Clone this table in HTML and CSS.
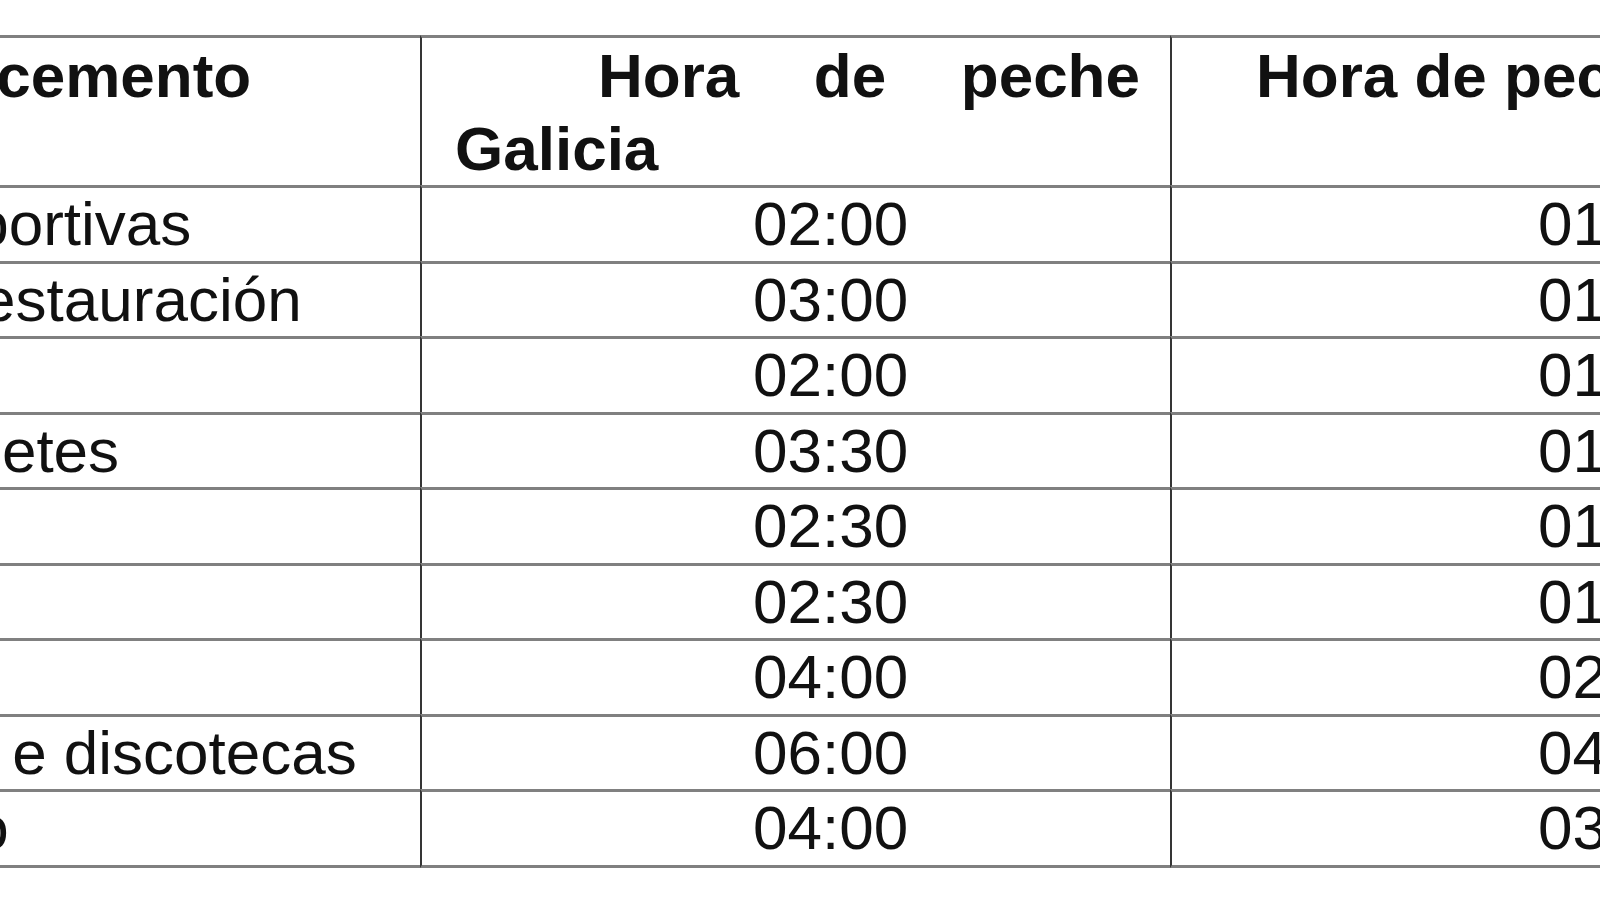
FILE: index.html
```html
<!DOCTYPE html>
<html lang="gl">
<head>
<meta charset="utf-8">
<title>Horarios de peche</title>
<link rel="stylesheet" href="styles.css">
</head>
<body>
<div class="crop">
  <table class="hours">
    <colgroup>
      <col class="c-type">
      <col class="c-gal">
      <col class="c-other">
    </colgroup>
    <thead>
      <tr>
        <th class="type">Tipo de establecemento</th>
        <th class="gal">
          <span class="spread"><span>Hora</span><span>de</span><span>peche</span></span>
          <span class="line">Galicia</span>
        </th>
        <th class="other">Hora de peche</th>
      </tr>
    </thead>
    <tbody>
      <tr><td class="type">Actividades deportivas</td><td class="gal">02:00</td><td class="other">01:00</td></tr>
      <tr><td class="type">Cafetarías de restauración</td><td class="gal">03:00</td><td class="other">01:00</td></tr>
      <tr><td class="type">Cafés</td><td class="gal">02:00</td><td class="other">01:00</td></tr>
      <tr><td class="type">Salas de banquetes</td><td class="gal">03:30</td><td class="other">01:00</td></tr>
      <tr><td class="type">Bares</td><td class="gal">02:30</td><td class="other">01:00</td></tr>
      <tr><td class="type">Cafetarías</td><td class="gal">02:30</td><td class="other">01:00</td></tr>
      <tr><td class="type">Pubs</td><td class="gal">04:00</td><td class="other">02:00</td></tr>
      <tr><td class="type">Salas de festas e discotecas</td><td class="gal">06:00</td><td class="other">04:00</td></tr>
      <tr><td class="type">Bingos e casino</td><td class="gal">04:00</td><td class="other">03:00</td></tr>
    </tbody>
  </table>
</div>
</body>
</html>
```

FILE: styles.css
```css
html, body {
  margin: 0;
  padding: 0;
  background: #ffffff;
}

.crop {
  width: 1600px;
  height: 900px;
  overflow: hidden;
  padding-top: 35px;
  box-sizing: border-box;
}

.hours {
  margin-left: -460px;
  width: 2530px;
  table-layout: fixed;
  border-collapse: separate;
  border-spacing: 0;
  font-family: "Liberation Sans", Arial, sans-serif;
  font-size: 62px;
  line-height: 72.5px;
  color: #111111;
}

.c-type { width: 880px; }
.c-gal { width: 750px; }
.c-other { width: 900px; }

.hours th,
.hours td {
  box-sizing: border-box;
  border-top: 3px solid #808080;
  padding: 0;
  vertical-align: top;
  white-space: nowrap;
  overflow: hidden;
}

.hours tbody tr:last-child td {
  border-bottom: 3px solid #808080;
}

.hours .gal,
.hours .other {
  border-left: 2px solid #353535;
}

.hours th {
  font-weight: bold;
  text-align: left;
  padding-top: 2px;
  height: 150px;
}

.hours th.type {
  padding-left: 6px;
}

.hours th.gal {
  padding-left: 33px;
  padding-right: 30px;
}

.hours th.other {
  padding-left: 84px;
}

.spread {
  display: flex;
  justify-content: space-between;
  margin-left: 143px;
}

.line {
  display: block;
}

.hours td {
  text-align: left;
}

.hours td.type {
  padding-left: 31px;
}

.hours td.gal {
  padding-left: 331px;
}

.hours td.other {
  padding-left: 366px;
}
```
